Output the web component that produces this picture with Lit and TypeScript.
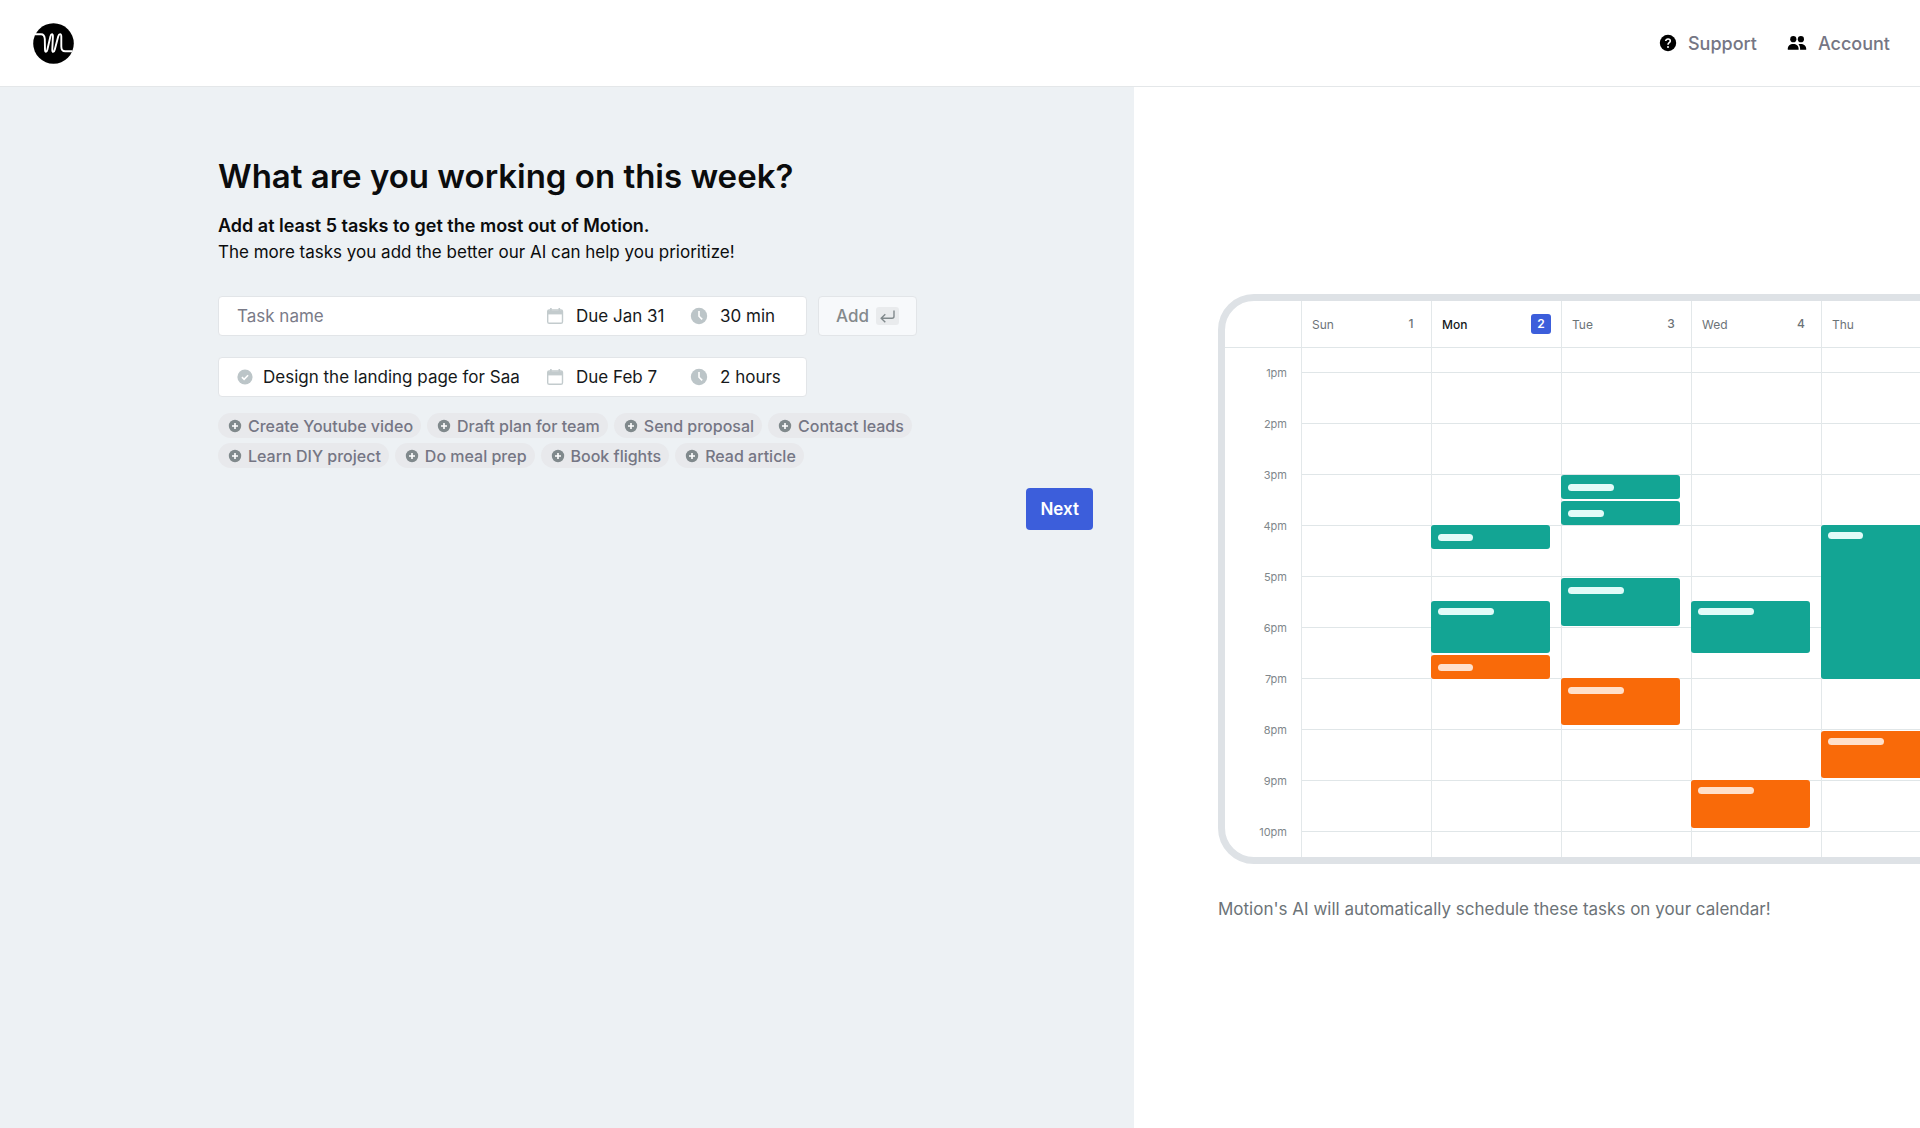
import { LitElement, html, css, svg } from "lit";
import { customElement, property } from "lit/decorators.js";
import { classMap } from "lit/directives/class-map.js";
import { styleMap } from "lit/directives/style-map.js";

/* Distance from the top of a day column to its first hour line. */
const FIRST_LINE = 24;

interface CalEvent {
  start: number;
  height: number;
  kind: "green" | "orange";
  bar: number;
  inset: number;
}

interface Day {
  name: string;
  date?: number;
  today?: boolean;
  events: CalEvent[];
}

const ev = (start: number, height: number, kind: "green" | "orange", bar: number, inset: number): CalEvent => ({
  start,
  height,
  kind,
  bar,
  inset,
});

const DAYS: Day[] = [
  { name: "Sun", date: 1, events: [] },
  {
    name: "Mon",
    date: 2,
    today: true,
    events: [ev(153, 24, "green", 35, 9), ev(229, 52, "green", 56, 7), ev(283, 24, "orange", 35, 9)],
  },
  {
    name: "Tue",
    date: 3,
    events: [
      ev(103, 24, "green", 46, 9),
      ev(129, 24, "green", 36, 9),
      ev(206, 48, "green", 56, 9),
      ev(306, 47, "orange", 56, 9),
    ],
  },
  { name: "Wed", date: 4, events: [ev(229, 52, "green", 56, 7), ev(408, 48, "orange", 56, 7)] },
  { name: "Thu", events: [ev(153, 154, "green", 35, 7), ev(359, 47, "orange", 56, 7)] },
];

const HOURS = ["1pm", "2pm", "3pm", "4pm", "5pm", "6pm", "7pm", "8pm", "9pm", "10pm"];

const SUGGESTIONS = [
  "Create Youtube video",
  "Draft plan for team",
  "Send proposal",
  "Contact leads",
  "Learn DIY project",
  "Do meal prep",
  "Book flights",
  "Read article",
];

const calendarIcon = html`<svg class="icon" width="18" height="18" viewBox="0 0 18 18" aria-hidden="true">
  ${svg`<rect x="1.7" y="3" width="14.8" height="13.3" rx="1.6" fill="none" stroke="#c3cbcd" stroke-width="1.4"/>
  <path d="M1.7 3.6h14.8v3.8H1.7z" fill="#c3cbcd"/>
  <path d="M4.9 1v3M13.3 1v3" stroke="#c3cbcd" stroke-width="1.6"/>`}
</svg>`;

const clockIcon = html`<svg class="icon" width="18" height="18" viewBox="0 0 18 18" aria-hidden="true">
  ${svg`<circle cx="9" cy="9" r="8.2" fill="#bcc5c8"/>
  <path d="M9 4v5.2l3.2 3.2" fill="none" stroke="#fff" stroke-width="1.6"/>`}
</svg>`;

const checkIcon = html`<svg class="icon" width="16" height="16" viewBox="0 0 16 16" aria-hidden="true">
  ${svg`<circle cx="8" cy="8" r="7.6" fill="#bcc5c8"/>
  <path d="M4.9 8.2l2.2 2.1 4-4.1" fill="none" stroke="#fff" stroke-width="1.6"/>`}
</svg>`;

const plusIcon = html`<svg class="icon" width="14" height="14" viewBox="0 0 14 14" aria-hidden="true">
  ${svg`<circle cx="7" cy="7" r="6.2" fill="#80898c"/>
  <path d="M7 4v6M4 7h6" stroke="#fff" stroke-width="1.6"/>`}
</svg>`;

@customElement("task-calendar")
export class TaskCalendar extends LitElement {
  static styles = css`
    :host {
      display: block;
      font-family: Inter, "Liberation Sans", sans-serif;
    }
    .frame {
      display: grid;
      grid-template-columns: 76px repeat(5, 130px);
      width: max-content;
      box-sizing: border-box;
      border: 7px solid #dee2e6;
      border-radius: 36px;
      overflow: hidden;
      background: #fff;
    }
    .corner,
    .head {
      height: 47px;
      box-sizing: border-box;
      border-bottom: 1px solid #e0e6e8;
    }
    .head {
      display: flex;
      align-items: center;
      justify-content: space-between;
      padding: 0 10px;
      border-left: 1px solid #e3e8ea;
      font-size: 12px;
      color: #6c7377;
    }
    .date {
      min-width: 20px;
      height: 20px;
      border-radius: 3px;
      line-height: 20px;
      text-align: center;
      font-weight: 500;
    }
    .today {
      color: #16191b;
      font-weight: 500;
    }
    .today .date {
      background: #3c5edb;
      color: #fff;
      font-weight: 600;
    }
    .hours {
      display: grid;
      grid-auto-rows: 51px;
      height: 509px;
      overflow: hidden;
    }
    .hour {
      padding-right: 14px;
      line-height: 51px;
      text-align: right;
      font-size: 11px;
      color: #80878b;
    }
    .day {
      position: relative;
      height: 509px;
      border-left: 1px solid #e3e8ea;
      background: repeating-linear-gradient(to bottom, transparent 0 24px, #e0e6e8 24px 25px, transparent 25px 51px);
    }
    .event {
      position: absolute;
      left: -1px;
      width: 119px;
      border-radius: 3px;
      box-sizing: border-box;
      padding-left: 7px;
    }
    .green {
      background: #13a594;
    }
    .orange {
      background: #f96a09;
    }
    .bar {
      height: 7px;
      border-radius: 4px;
      background: #e2fbf8;
    }
    .orange .bar {
      background: #ffe0cb;
    }
  `;

  private renderEvent(e: CalEvent) {
    return html`<div
      class=${classMap({ event: true, [e.kind]: true })}
      style=${styleMap({ top: `${e.start + FIRST_LINE}px`, height: `${e.height}px`, paddingTop: `${e.inset}px` })}
    >
      <div class="bar" style=${styleMap({ width: `${e.bar}px` })}></div>
    </div>`;
  }

  render() {
    return html`<div class="frame">
      <div class="corner"></div>
      ${DAYS.map(
        (d) => html`<div class=${classMap({ head: true, today: !!d.today })}>
          <span>${d.name}</span>${d.date ? html`<span class="date">${d.date}</span>` : ""}
        </div>`
      )}
      <div class="hours">${HOURS.map((h) => html`<div class="hour">${h}</div>`)}</div>
      ${DAYS.map((d) => html`<div class="day">${d.events.map((e) => this.renderEvent(e))}</div>`)}
    </div>`;
  }
}

@customElement("task-row")
export class TaskRow extends LitElement {
  @property() name = "";
  @property() due = "";
  @property() duration = "";
  @property({ type: Boolean }) saved = false;

  static styles = css`
    :host {
      display: block;
    }
    .row {
      display: grid;
      grid-template-columns: 1fr 144px 116px;
      align-items: center;
      height: 40px;
      box-sizing: border-box;
      border: 1px solid #e2e5e8;
      border-radius: 4px;
      background: #fff;
    }
    .name {
      display: flex;
      align-items: center;
      gap: 10px;
      min-width: 0;
      padding: 0 20px 0 18px;
    }
    .field {
      flex: 1;
      min-width: 0;
      height: 36px;
      padding: 0;
      border: 0;
      outline: 0;
      background: none;
      font: inherit;
      color: #16191b;
    }
    .field::placeholder {
      color: #7a7b88;
      opacity: 1;
    }
    .pick {
      display: flex;
      align-items: center;
      gap: 12px;
      padding: 0;
      border: 0;
      background: none;
      font: inherit;
      color: #16191b;
      white-space: nowrap;
      cursor: pointer;
    }
    .icon {
      flex: none;
    }
  `;

  render() {
    return html`<div class="row">
      <div class="name">
        ${this.saved ? checkIcon : ""}
        <input class="field" type="text" aria-label="Task name" placeholder="Task name" .value=${this.name} />
      </div>
      <button class="pick" type="button">${calendarIcon}${this.due}</button>
      <button class="pick" type="button">${clockIcon}${this.duration}</button>
    </div>`;
  }
}

@customElement("app-root")
export class AppRoot extends LitElement {
  static styles = css`
    :host {
      display: flex;
      flex-direction: column;
      min-height: 100vh;
      background: #fff;
      color: #0b0c0d;
      font-family: Inter, "Liberation Sans", sans-serif;
      font-size: 17px;
    }
    .top {
      display: flex;
      align-items: center;
      justify-content: space-between;
      height: 86px;
      padding: 0 30px 0 33px;
      border-bottom: 1px solid #e4e7e9;
    }
    .logo {
      display: flex;
    }
    .nav {
      display: flex;
      gap: 30px;
    }
    .link {
      display: flex;
      align-items: center;
      gap: 11px;
      color: #757684;
      font-weight: 500;
      font-size: 18px;
      text-decoration: none;
    }
    .main {
      flex: 1;
      display: grid;
      grid-template-columns: 189fr 131fr;
    }
    .left {
      padding: 68px 41px 68px 218px;
      background: #edf1f4;
    }
    .title {
      margin: 0;
      font-size: 33px;
      line-height: 42px;
      font-weight: 600;
    }
    .intro {
      margin: 15px 0 30px;
      line-height: 27px;
    }
    .lead {
      display: block;
      font-size: 18px;
      font-weight: 600;
    }
    .adder {
      display: flex;
      gap: 11px;
      margin-bottom: 21px;
    }
    .task {
      flex: 0 1 589px;
    }
    .list {
      max-width: 589px;
    }
    .add {
      display: flex;
      align-items: center;
      gap: 7px;
      height: 40px;
      padding: 0 17px;
      border: 1px solid #e2e5e8;
      border-radius: 4px;
      background: #f7f9fb;
      color: #84898c;
      font: inherit;
      font-weight: 500;
    }
    .key {
      display: flex;
      border-radius: 3px;
      background: #e9ebed;
    }
    .chips {
      display: flex;
      flex-wrap: wrap;
      gap: 5px 6px;
      max-width: 700px;
      margin: 16px 0 20px;
      padding: 0;
      list-style: none;
    }
    .chip {
      display: flex;
      align-items: center;
      gap: 6px;
      height: 25px;
      padding: 0 8px 0 10px;
      border: 0;
      border-radius: 13px;
      background: #e8e9ec;
      color: #757684;
      font: inherit;
      font-size: 16px;
      font-weight: 500;
    }
    .actions {
      display: flex;
      justify-content: flex-end;
    }
    .next {
      height: 42px;
      padding: 0 14px;
      border: 0;
      border-radius: 4px;
      background: #3c5edb;
      color: #fff;
      font: inherit;
      font-weight: 600;
    }
    .right {
      display: flex;
      flex-direction: column;
      justify-content: center;
      min-width: 0;
      padding: 2px 0 0 84px;
      overflow: hidden;
    }
    .caption {
      margin: 32px 0 0;
      line-height: 27px;
      color: #6c7377;
    }
  `;

  render() {
    return html`
      <header class="top">
        <a class="logo" href="#" aria-label="Home">
          <svg width="41" height="41" viewBox="0 0 41 41" aria-hidden="true">
            <circle cx="20.5" cy="20.5" r="20.3" fill="#000" />
            <path
              d="M1.8 11.3H8C10.6 11.3 11.6 12.6 11.8 16L12 26.5C12.1 29.7 13.6 29.7 14.4 26.5L17.4 13.5C18.2 10.2 20 10.4 19.9 13.5L19.3 26.5C19.2 29.7 21 29.7 21.8 26.5L25.2 13.5C26.1 10.2 28.3 10.4 28.3 13.5V23.5C28.3 27 29.6 28.3 32.2 28.3H39.5"
              fill="none"
              stroke="#fff"
              stroke-width="1.9"
            />
          </svg>
        </a>
        <nav class="nav">
          <a class="link" href="#support">
            <svg width="18" height="18" viewBox="0 0 18 18" aria-hidden="true">
              <circle cx="9" cy="9" r="8.2" fill="#000" />
              <path d="M6.7 7.1C6.7 4.3 11.3 4.4 11.3 7.1C11.3 8.8 9 8.7 9 10.7" fill="none" stroke="#fff" stroke-width="1.6" />
              <circle cx="9" cy="12.9" r="1" fill="#fff" />
            </svg>
            Support
          </a>
          <a class="link" href="#account">
            <svg width="20" height="18" viewBox="0 0 20 18" aria-hidden="true">
              <circle cx="6.3" cy="5.2" r="3.1" fill="#000" />
              <circle cx="13.9" cy="5.2" r="3.1" fill="#000" />
              <path d="M.8 15.8V14.6C.8 11.8 3 9.9 6.2 9.9S11.6 11.8 11.6 14.6V15.8Z" fill="#000" />
              <path d="M13.1 15.8V14.4C13.1 12.6 12.4 11.1 11.4 10.2C15.6 9.2 19.2 11 19.2 14.6V15.8Z" fill="#000" />
            </svg>
            Account
          </a>
        </nav>
      </header>
      <main class="main">
        <section class="left">
          <h1 class="title">What are you working on this week?</h1>
          <p class="intro">
            <strong class="lead">Add at least 5 tasks to get the most out of Motion.</strong>
            The more tasks you add the better our AI can help you prioritize!
          </p>
          <div class="adder">
            <task-row class="task" due="Due Jan 31" duration="30 min"></task-row>
            <button class="add" type="button">
              Add
              <span class="key">
                <svg width="23" height="18" viewBox="0 0 23 18" aria-hidden="true">
                  <path
                    d="M18 3.5V9.2Q18 11.2 16 11.2H5.5M9.3 7.2L5.2 11.2L9.3 15.2"
                    fill="none"
                    stroke="#80898c"
                    stroke-width="1.4"
                  />
                </svg>
              </span>
            </button>
          </div>
          <task-row class="list" saved name="Design the landing page for Saa" due="Due Feb 7" duration="2 hours"></task-row>
          <ul class="chips">
            ${SUGGESTIONS.map((s) => html`<li><button class="chip" type="button">${plusIcon}${s}</button></li>`)}
          </ul>
          <div class="actions"><button class="next" type="button">Next</button></div>
        </section>
        <section class="right">
          <task-calendar></task-calendar>
          <p class="caption">Motion's AI will automatically schedule these tasks on your calendar!</p>
        </section>
      </main>
    `;
  }
}
